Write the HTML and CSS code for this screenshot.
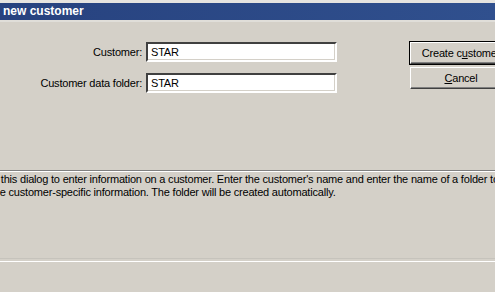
FILE: index.html
```html
<!DOCTYPE html>
<html lang="en">
<head>
    <meta charset="UTF-8">
    <title>new customer</title>
    <link rel="stylesheet" href="styles.css">
</head>
<body>
    <div class="dialog">
        <div class="titlebar">new customer</div>

        <div class="formArea">
            <div class="fields">
                <label for="cust">Customer:</label>
                <input type="text" id="cust" value="STAR">

                <label for="folder">Customer data folder:</label>
                <input type="text" id="folder" value="STAR">
            </div>
            <div class="buttons">
                <button type="submit" class="defaultbtn">Create c<u>u</u>stomer</button>
                <button type="button"><u>C</u>ancel</button>
            </div>
        </div>

        <div class="info">
            <div class="line1">Use this dialog to enter information on a customer. Enter the customer's name and enter the name of a folder to store</div>
            <div class="line2">the customer-specific information. The folder will be created automatically.</div>
        </div>

        <div class="bottomRule"></div>
    </div>
</body>
</html>
```

FILE: styles.css
```css
body {
    margin: 0;
    background-color: #d4d0c8;
    font-family: "Liberation Sans", Arial, sans-serif;
    font-size: 11px;
    letter-spacing: -0.2px;
    color: #000;
    overflow: hidden;
}

.dialog {
    border-top: 3px solid #e6e4e0;
}

.titlebar {
    height: 17px;
    line-height: 17px;
    padding-left: 3px;
    background: linear-gradient(to right, #27427f, #30508e);
    color: #fff;
    font-size: 12px;
    font-weight: bold;
    letter-spacing: 0;
    border-bottom: 2px solid #e0ded9;
    white-space: nowrap;
}

.formArea {
    display: flex;
    padding-top: 20px;
}

.fields {
    display: grid;
    grid-template-columns: 142px 191px;
    column-gap: 4px;
    row-gap: 11px;
    align-items: center;
}

.fields label {
    text-align: right;
}

.fields input {
    height: 20px;
    box-sizing: border-box;
    padding: 0 3px;
    margin: 0;
    background: #fff;
    border-style: solid;
    border-width: 2px;
    border-color: #404040 #fff #fff #404040;
    box-shadow: inset -1px -1px 0 #d4d0c8;
    font-family: inherit;
    font-size: 11px;
    letter-spacing: -0.2px;
    color: #000;
}

.buttons {
    display: flex;
    flex-direction: column;
    gap: 3px;
    margin-left: 73px;
}

button {
    width: 102px;
    height: 22px;
    margin: 0;
    padding: 0;
    background: #d4d0c8;
    border: 1px solid;
    border-color: #fff #404040 #404040 #fff;
    box-shadow: inset -1px -1px 0 #808080;
    font-family: inherit;
    font-size: 11px;
    letter-spacing: -0.2px;
    color: #000;
    white-space: nowrap;
}

.defaultbtn {
    outline: 1px solid #000;
    outline-offset: 0;
}

.info {
    margin-top: 77px;
    border-top: 1px solid #808080;
    box-shadow: inset 0 1px 0 #fff;
    padding-top: 2px;
    line-height: 13px;
    white-space: nowrap;
}

.line1 {
    margin-left: -21px;
}

.line2 {
    margin-left: -9px;
}

.bottomRule {
    margin-top: 59px;
    height: 2px;
    border-top: 1px solid #c6c3bc;
    border-bottom: 1px solid #fff;
}
```
